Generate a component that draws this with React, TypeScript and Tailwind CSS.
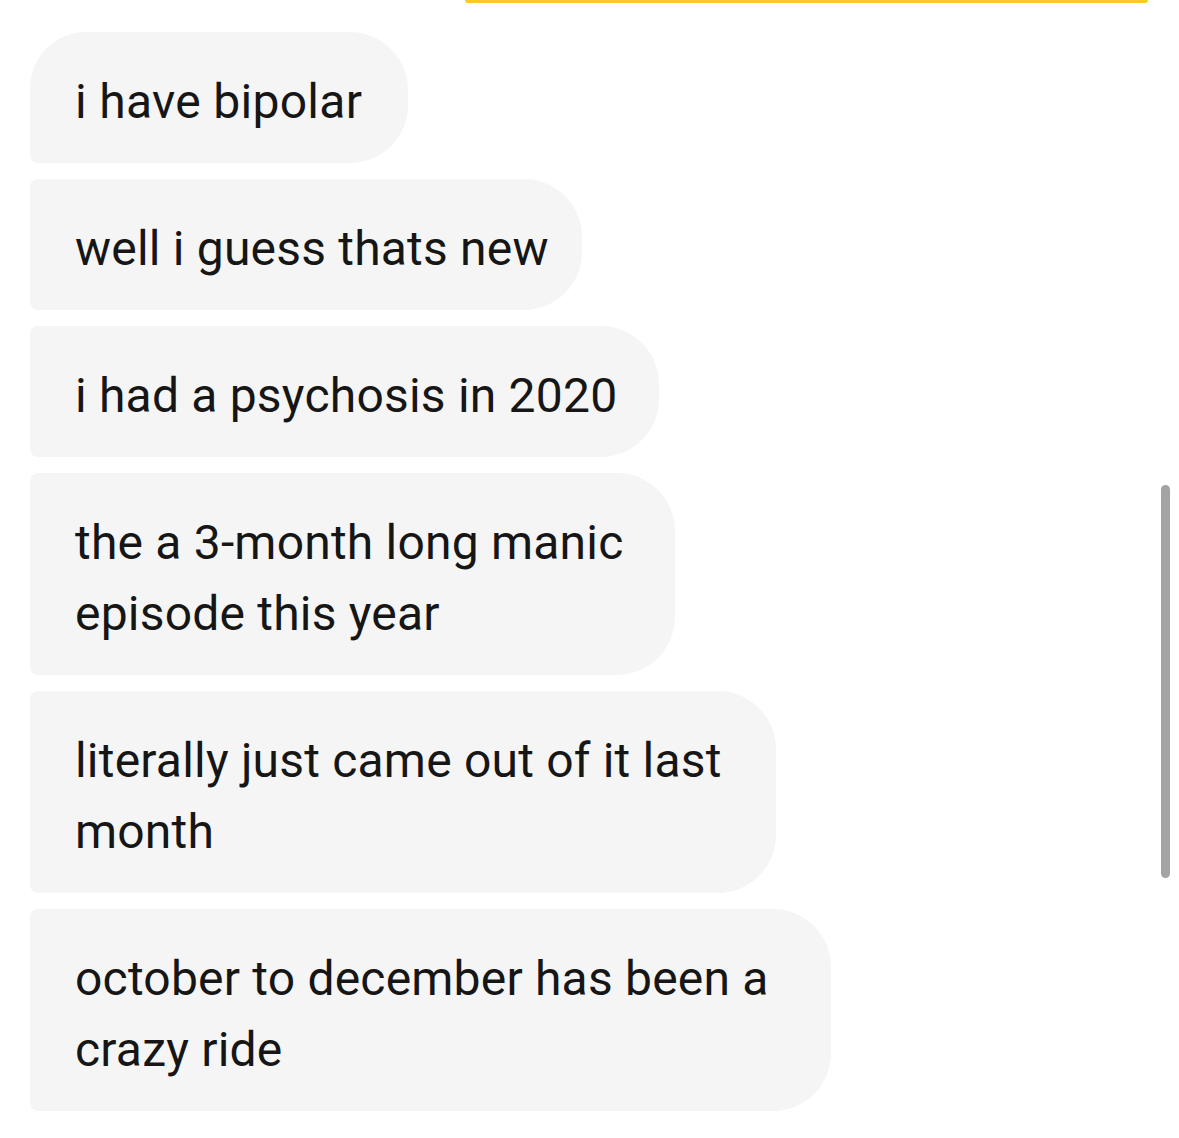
import React from "react";

const msgs: { text: string; w: string; one?: boolean }[] = [
  { text: "well i guess thats new", w: "w-[552px]", one: true },
  { text: "i had a psychosis in 2020", w: "w-[629px]", one: true },
  { text: "the a 3-month long manic episode this year", w: "w-[645px]" },
  { text: "literally just came out of it last month", w: "w-[746px]" },
  { text: "october to december has been a crazy ride", w: "w-[801px]" },
];

export default function App() {
  return (
    <div className="relative w-[1179px] h-[1138px] bg-white overflow-hidden" style={{ fontFamily: "Roboto, 'Noto Sans', sans-serif" }}>
      <div className="ml-[465px] w-[683px] h-[3px] bg-[#ffc72c] rounded-b-[3px]" />
      <div className="flex flex-col items-start gap-[16px] pl-[30px] pt-[29px]">
        <div className="w-[378px] bg-[#f5f5f5] rounded-tl-[56px] rounded-r-[58px] rounded-bl-[8px] pl-[45px] pt-[34px] pb-[26px] text-[48px] leading-[71px] text-[#161616] tracking-[0.3px] whitespace-nowrap">
          i have bipolar
        </div>
        {msgs.map((m, i) => (
          <div
            key={i}
            className={`bg-[#f5f5f5] rounded-l-[8px] rounded-r-[58px] pl-[45px] pt-[34px] pb-[26px] text-[48px] leading-[71px] text-[#161616] tracking-[0.2px] ${m.w} ${m.one ? "whitespace-nowrap" : "pr-[40px]"}`}
          >
            {m.text}
          </div>
        ))}
      </div>
      <div className="absolute left-[1161px] top-[485px] w-[9px] h-[393px] rounded-full bg-[#a3a3a3]" />
    </div>
  );
}
